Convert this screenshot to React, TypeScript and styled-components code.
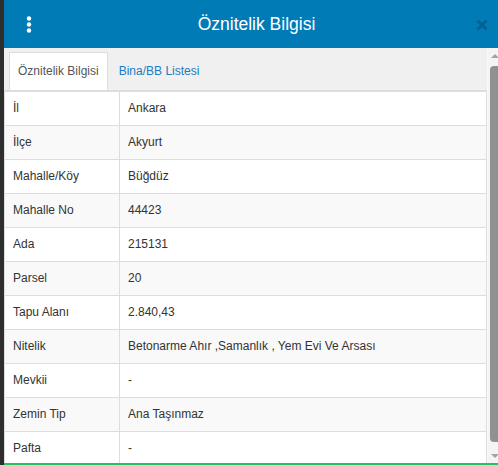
import React from "react";
import styled, { createGlobalStyle } from "styled-components";

const Global = createGlobalStyle`
  html, body { margin: 0; padding: 0; }
  body { background: #2c2c2c; font-family: "Liberation Sans", Arial, sans-serif; overflow: hidden; }
  * { box-sizing: border-box; }
`;

const Page = styled.div`
  display: flex;
  height: 465px;
  width: 498px;
`;

const MapEdge = styled.div`
  width: 4px;
  flex: none;
  background: #2e2e2e;
`;

const Panel = styled.div`
  flex: 1;
  display: flex;
  flex-direction: column;
  height: 465px;
  border-bottom: 2px solid #27c164;
  overflow: hidden;
`;

const Header = styled.div`
  height: 48px;
  flex: none;
  background: #007bb6;
  display: flex;
  align-items: center;
  padding: 0 10px 0 19px;
  color: #fff;
`;

const MenuButton = styled.div`
  width: 12px;
  display: flex;
  justify-content: center;
`;

const Title = styled.div`
  flex: 1;
  text-align: center;
  font-size: 17.5px;
  padding-left: 2px;
`;

const Close = styled.div`
  width: 12px;
  display: flex;
  justify-content: center;
  margin-top: 1px;
`;

const Body = styled.div`
  flex: 1;
  display: flex;
  min-height: 0;
`;

const Content = styled.div`
  flex: 1;
  background: #f0f0f0;
  padding-top: 4px;
  overflow: hidden;
`;

const Tabs = styled.div`
  display: flex;
  padding-left: 5px;
  border-bottom: 2px solid #dddddd;
`;

const Tab = styled.div<{ $active?: boolean }>`
  padding: 10px 8px;
  margin-right: 2px;
  font-size: 12px;
  line-height: 17px;
  color: ${(p) => (p.$active ? "#555" : "#1b7dc2")};
  background: ${(p) => (p.$active ? "#fff" : "transparent")};
  border: 1px solid ${(p) => (p.$active ? "#dddddd" : "transparent")};
  border-bottom: none;
`;

const Table = styled.table`
  width: 100%;
  border-collapse: collapse;
  background: #fff;
  border: 1px solid #dddddd;
  border-top: none;
`;

const Row = styled.tr<{ $striped?: boolean }>`
  background: ${(p) => (p.$striped ? "#f9f9f9" : "#fff")};
`;

const Cell = styled.td<{ $key?: boolean }>`
  border: 1px solid #dddddd;
  border-top: none;
  padding: 8px 8px;
  font-size: 12px;
  line-height: 17px;
  color: #333;
  width: ${(p) => (p.$key ? "115px" : "auto")};
`;

const Scrollbar = styled.div`
  width: 11px;
  flex: none;
  background: #f4f4f4;
  border-left: 1px solid #fafafa;
  display: flex;
  flex-direction: column;
  align-items: stretch;
`;

const Arrow = styled.div<{ $down?: boolean }>`
  height: 15px;
  display: flex;
  align-items: center;
  justify-content: center;
  padding-left: 3px;
  &::after {
    content: "";
    border-left: 4px solid transparent;
    border-right: 4px solid transparent;
    ${(p) =>
      p.$down
        ? "border-top: 4px solid #a3a3a3;"
        : "border-bottom: 4px solid #a3a3a3;"}
  }
`;

const Thumb = styled.div`
  flex: 1;
  margin: 3px 0 6px 2px;
  background: #919191;
  border-radius: 4px 0 0 4px;
`;

const rows: [string, string][] = [
  ["İl", "Ankara"],
  ["İlçe", "Akyurt"],
  ["Mahalle/Köy", "Büğdüz"],
  ["Mahalle No", "44423"],
  ["Ada", "215131"],
  ["Parsel", "20"],
  ["Tapu Alanı", "2.840,43"],
  ["Nitelik", "Betonarme Ahır ,Samanlık , Yem Evi Ve Arsası"],
  ["Mevkii", "-"],
  ["Zemin Tip", "Ana Taşınmaz"],
  ["Pafta", "-"],
];

export default function App() {
  return (
    <Page>
      <Global />
      <MapEdge />
      <Panel>
        <Header>
          <MenuButton>
            <svg width="6" height="17" viewBox="0 0 6 17">
              <circle cx="3" cy="2.5" r="2.2" fill="#fff" />
              <circle cx="3" cy="8.5" r="2.2" fill="#fff" />
              <circle cx="3" cy="14.5" r="2.2" fill="#fff" />
            </svg>
          </MenuButton>
          <Title>Öznitelik Bilgisi</Title>
          <Close>
            <svg width="12" height="12" viewBox="0 0 12 12">
              <path d="M1.5 1.5 L10.5 10.5 M10.5 1.5 L1.5 10.5" stroke="#006292" strokeWidth="3" />
            </svg>
          </Close>
        </Header>
        <Body>
          <Content>
            <Tabs>
              <Tab $active>Öznitelik Bilgisi</Tab>
              <Tab>Bina/BB Listesi</Tab>
            </Tabs>
            <Table>
              <tbody>
                {rows.map(([k, v], i) => (
                  <Row key={k} $striped={i % 2 === 1}>
                    <Cell $key>{k}</Cell>
                    <Cell>{v}</Cell>
                  </Row>
                ))}
              </tbody>
            </Table>
          </Content>
          <Scrollbar>
            <Arrow />
            <Thumb />
            <Arrow $down />
          </Scrollbar>
        </Body>
      </Panel>
    </Page>
  );
}
